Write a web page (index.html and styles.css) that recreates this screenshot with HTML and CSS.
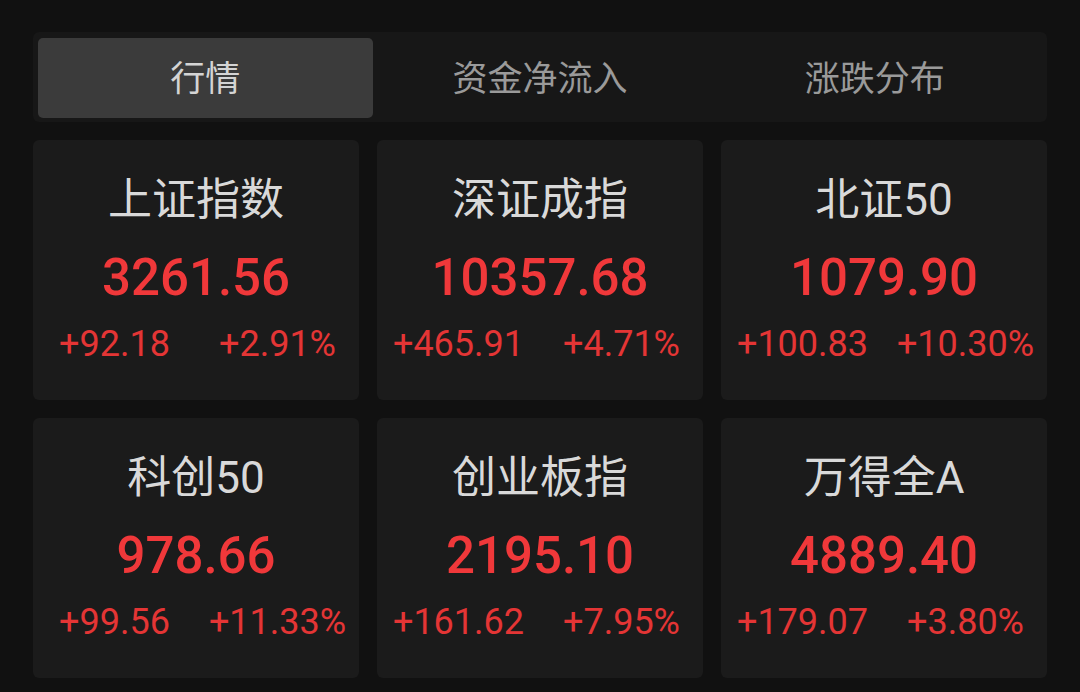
FILE: index.html
```
<!DOCTYPE html>
<html lang="zh-CN">
<head>
<meta charset="utf-8">
<title>行情</title>
<link rel="stylesheet" href="styles.css">
</head>
<body>
<div class="page">
  <div class="tabs">
    <div class="tab active">行情</div>
    <div class="tab">资金净流入</div>
    <div class="tab">涨跌分布</div>
  </div>
  <div class="grid">
    <div class="card">
      <div class="name">上证指数</div>
      <div class="price">3261.56</div>
      <div class="chg"><span>+92.18</span><span>+2.91%</span></div>
    </div>
    <div class="card">
      <div class="name">深证成指</div>
      <div class="price">10357.68</div>
      <div class="chg"><span>+465.91</span><span>+4.71%</span></div>
    </div>
    <div class="card">
      <div class="name">北证50</div>
      <div class="price">1079.90</div>
      <div class="chg"><span>+100.83</span><span>+10.30%</span></div>
    </div>
    <div class="card">
      <div class="name">科创50</div>
      <div class="price">978.66</div>
      <div class="chg"><span>+99.56</span><span>+11.33%</span></div>
    </div>
    <div class="card">
      <div class="name">创业板指</div>
      <div class="price">2195.10</div>
      <div class="chg"><span>+161.62</span><span>+7.95%</span></div>
    </div>
    <div class="card">
      <div class="name">万得全A</div>
      <div class="price">4889.40</div>
      <div class="chg"><span>+179.07</span><span>+3.80%</span></div>
    </div>
  </div>
</div>
</body>
</html>
```

FILE: styles.css
```
html, body {
  margin: 0;
  padding: 0;
  background: #111111;
}
body {
  width: 1080px;
  height: 692px;
  overflow: hidden;
  font-family: Roboto, "Noto Sans CJK SC", sans-serif;
}
.page {
  padding: 32px 33px 0 33px;
}
.tabs {
  display: grid;
  grid-template-columns: 1fr 1fr 1fr;
  background: #171717;
  border-radius: 6px;
  padding: 6px 5px 4px 5px;
  height: 80px;
}
.tab {
  display: flex;
  align-items: center;
  justify-content: center;
  padding-bottom: 5px;
  font-family: "Noto Sans CJK SC", sans-serif;
  font-size: 35px;
  color: #9a9a9a;
  border-radius: 5px;
}
.tab.active {
  background: #3b3b3b;
  color: #d4d4d4;
}
.grid {
  margin-top: 18px;
  display: grid;
  grid-template-columns: repeat(3, 326px);
  grid-auto-rows: 260px;
  column-gap: 18px;
  row-gap: 18px;
}
.card {
  background: #1b1b1b;
  border-radius: 6px;
  padding-top: 35px;
  text-align: center;
  box-sizing: border-box;
}
.name {
  font-family: Roboto, "Noto Sans CJK SC", sans-serif;
  font-size: 44px;
  line-height: 50px;
  color: #d9d9d9;
}
.price {
  margin-top: 23px;
  font-size: 51px;
  line-height: 60px;
  font-weight: 500;
  color: #f0383a;
}
.chg {
  margin-top: 14px;
  display: grid;
  grid-template-columns: 1fr 1fr;
  font-size: 36px;
  line-height: 44px;
  color: #e43535;
}
.chg span {
  text-align: center;
}
```
